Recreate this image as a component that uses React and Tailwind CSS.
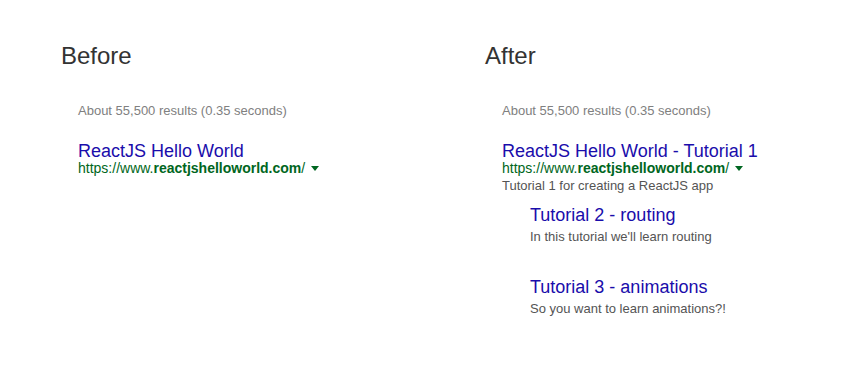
const FONT = "font-['Liberation_Sans',Arial,sans-serif]"

function Url() {
  return (
    <div className="flex items-center text-[14px] leading-[16px] text-[#006621]">
      <span>
        https://www.<b>reactjshelloworld.com</b>/
      </span>
      <span className="ml-[6px] mt-[1px] w-0 h-0 border-l-[4px] border-r-[4px] border-t-[5px] border-l-transparent border-r-transparent border-t-[#006621]" />
    </div>
  )
}

function Column({ label, children }) {
  return (
    <div className="w-[424px] shrink-0 pl-[61px] pt-[42px]">
      <h2 className="text-[24px] leading-[28px] text-[#333333]">{label}</h2>
      <div className="pl-[17px] pt-[33px]">
        <p className="text-[13px] leading-[16px] text-[#808080]">About 55,500 results (0.35 seconds)</p>
        {children}
      </div>
    </div>
  )
}

function SubLink({ title, desc, className = '' }) {
  return (
    <div className={className}>
      <a className="block text-[18px] leading-[18px] text-[#1a0dab]">{title}</a>
      <p className="mt-[5px] text-[13px] leading-[16px] text-[#545454]">{desc}</p>
    </div>
  )
}

export default function App() {
  return (
    <div className={`${FONT} bg-white w-[843px] h-[369px] flex`}>
      <Column label="Before">
        <a className="block mt-[23px] text-[18px] leading-[18px] text-[#1a0dab]">ReactJS Hello World</a>
        <Url />
      </Column>

      <Column label="After">
        <a className="block mt-[23px] text-[18px] leading-[18px] text-[#1a0dab]">ReactJS Hello World - Tutorial 1</a>
        <Url />
        <p className="mt-[2px] text-[13px] leading-[16px] text-[#545454]">Tutorial 1 for creating a ReactJS app</p>
        <div className="pl-[28px]">
          <SubLink className="mt-[12px]" title="Tutorial 2 - routing" desc="In this tutorial we'll learn routing" />
          <SubLink className="mt-[33px]" title="Tutorial 3 - animations" desc="So you want to learn animations?!" />
        </div>
      </Column>
    </div>
  )
}
